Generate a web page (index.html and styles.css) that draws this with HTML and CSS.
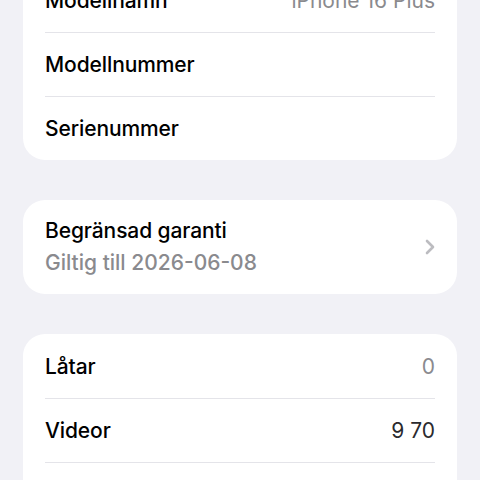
FILE: index.html
```html
<!DOCTYPE html>
<html>
<head>
<meta http-equiv="Content-Type" content="text/html; charset=utf-8"/>
<title>Om</title>
<link rel="stylesheet" href="styles.css">
</head>
<body>

<div class="page">
  <div class="card card-first">
    <div class="row">
      <span class="label">Modellnamn</span>
      <span class="value">iPhone 16 Plus</span>
    </div>
    <div class="row">
      <span class="label">Modellnummer</span>
      <span class="value"></span>
    </div>
    <div class="row">
      <span class="label">Serienummer</span>
      <span class="value"></span>
    </div>
  </div>

  <div class="card warranty">
    <div class="warranty-text">
      <div class="label">Begränsad garanti</div>
      <div class="sub">Giltig till 2026-06-08</div>
    </div>
    <svg class="chevron" width="10" height="16" viewBox="0 0 10 16">
      <path d="M2 2 L8 8 L2 14" fill="none" stroke="#bcbcc0" stroke-width="2.6" stroke-linecap="round" stroke-linejoin="round"/>
    </svg>
  </div>

  <div class="card">
    <div class="row">
      <span class="label">Låtar</span>
      <span class="value">0</span>
    </div>
    <div class="row">
      <span class="label">Videor</span>
      <span class="value value-dark">9 70</span>
    </div>
    <!-- next row starts below the fold -->
    <div class="row"></div>
  </div>
</div>

</body>
</html>
```

FILE: styles.css
```css
body {
   margin: 0;
   background-color: #f1f1f6;
   font-family: Inter, "Noto Sans", sans-serif;
   color: #000;
   overflow: hidden;
}

.page {
   display: flex;
   flex-direction: column;
   gap: 40px;
   padding: 0 23px;
}

.card {
   background-color: #fff;
   border-radius: 22px;
}

.card-first {
   margin-top: -32px;
   border-top-left-radius: 0;
   border-top-right-radius: 0;
}

.row {
   display: flex;
   justify-content: space-between;
   align-items: center;
   height: 64px;
   margin: 0 22px;
   border-top: 1px solid #e4e4e9;
   box-sizing: border-box;
}

.row:first-child {
   border-top: none;
}

.label {
   font-size: 21px;
   font-weight: 500;
   letter-spacing: -0.1px;
}

.value {
   font-size: 21px;
   color: #8a8a8e;
}

.value-dark {
   color: #2a2a2e;
}

.warranty {
   display: flex;
   align-items: center;
   justify-content: space-between;
   padding: 15px 22px;
}

.warranty-text {
   line-height: 32px;
}

.sub {
   font-size: 21px;
   font-weight: 500;
   color: #8a8a8e;
}

.chevron {
   display: block;
}
```
